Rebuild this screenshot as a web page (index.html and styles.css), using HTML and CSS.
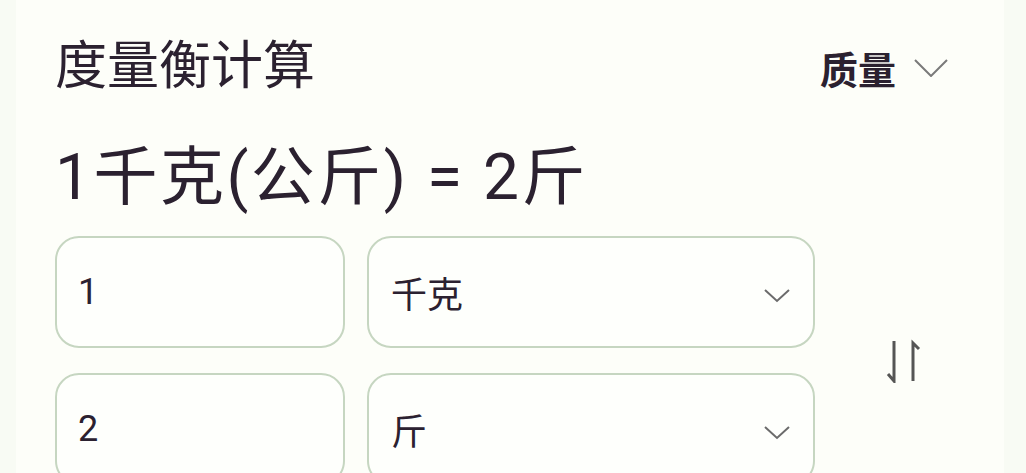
FILE: index.html
```html
<!DOCTYPE html>
<html lang="zh-CN">
<head>
    <meta charset="UTF-8">
    <meta name="viewport" content="width=device-width, initial-scale=1.0">
    <title>度量衡计算</title>
    <link rel="stylesheet" href="styles.css">
</head>
<body>
    <div class="page">
        <div class="header">
            <h1>度量衡计算</h1>
            <div class="category">
                <span>质量</span>
                <svg class="chevron-lg" width="34" height="18" viewBox="0 0 34 18">
                    <polyline points="1,1 17,17 33,1" fill="none" stroke="#7a7a7a" stroke-width="2"/>
                </svg>
            </div>
        </div>

        <div class="result">1千克(公斤) = 2斤</div>

        <div class="converter">
            <input class="value-box" type="text" value="1">
            <div class="unit-box">
                <span>千克</span>
                <svg class="chevron" width="26" height="14" viewBox="0 0 26 14">
                    <polyline points="1,1 13,12 25,1" fill="none" stroke="#6b6b6b" stroke-width="2"/>
                </svg>
            </div>
            <div class="swap">
                <svg width="40" height="44" viewBox="0 0 40 44">
                    <!-- down arrow on the left, up arrow on the right -->
                    <polyline points="4,35 10,42 10,2" fill="none" stroke="#555" stroke-width="3"/>
                    <polyline points="29,42 29,4 35,10" fill="none" stroke="#555" stroke-width="3"/>
                </svg>
            </div>
            <input class="value-box" type="text" value="2">
            <div class="unit-box">
                <span>斤</span>
                <svg class="chevron" width="26" height="14" viewBox="0 0 26 14">
                    <polyline points="1,1 13,12 25,1" fill="none" stroke="#6b6b6b" stroke-width="2"/>
                </svg>
            </div>
        </div>
    </div>
</body>
</html>
```

FILE: styles.css
```css
* {
    margin: 0;
    padding: 0;
    box-sizing: border-box;
    font-family: Roboto, "Noto Sans CJK SC", sans-serif;
}
body {
    background-color: #f8fbf4;
    overflow: hidden;
}
.page {
    margin: 0 22px 0 16px;
    height: 473px;
    background-color: #fdfef9;
    padding: 35px 56px 0 39px;
    color: #2b2130;
}
.header {
    display: flex;
    justify-content: space-between;
    align-items: center;
}
h1 {
    font-size: 52px;
    font-weight: 400;
    line-height: 64px;
}
.category {
    display: flex;
    align-items: center;
    gap: 18px;
    font-size: 38px;
    font-weight: 700;
}
.chevron-lg {
    margin-top: 2px;
}
.result {
    margin-top: 43px;
    font-size: 64px;
    line-height: 72px;
    letter-spacing: 2.5px;
}
.converter {
    margin-top: 22px;
    display: grid;
    grid-template-columns: 290px 448px 134px;
    grid-template-rows: 112px 112px;
    column-gap: 22px;
    row-gap: 25px;
}
.value-box, .unit-box {
    border: 2px solid #c6d6c1;
    border-radius: 24px;
    background-color: #fefffc;
    font-size: 36px;
    color: #2b2130;
}
.value-box {
    padding-left: 21px;
    outline: none;
}
.unit-box {
    display: flex;
    align-items: center;
    justify-content: space-between;
    padding: 0 23px 0 22px;
}
.chevron {
    margin-top: 8px;
}
.swap {
    grid-column: 3;
    grid-row: 1 / span 2;
    display: flex;
    align-items: center;
    justify-content: center;
}
```
